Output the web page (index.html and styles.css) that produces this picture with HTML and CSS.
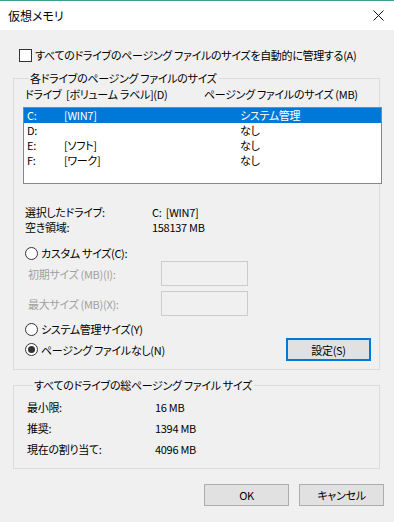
FILE: index.html
```html
<!DOCTYPE html>
<html lang="ja">
<head>
    <meta charset="UTF-8">
    <meta name="viewport" content="width=device-width, initial-scale=1.0">
    <title>仮想メモリ</title>
    <link rel="stylesheet" href="styles.css">
</head>
<body>
    <div class="titlebar">
        <span class="title">仮想メモリ</span>
        <svg class="close" width="11" height="11" viewBox="0 0 11 11">
            <path d="M0.5 0.5 L10.5 10.5 M10.5 0.5 L0.5 10.5" stroke="#111" stroke-width="1" fill="none"/>
        </svg>
    </div>

    <label class="auto">
        <input type="checkbox" class="check">
        <span>すべてのドライブのページング ファイルのサイズを自動的に管理する(A)</span>
    </label>

    <fieldset class="group group-drives">
        <legend>各ドライブのページング ファイルのサイズ</legend>
        <div class="list-head">
            <span>ドライブ</span>
            <span>[ボリューム ラベル](D)</span>
            <span>ページング ファイルのサイズ (MB)</span>
        </div>
        <div class="listbox">
            <div class="row selected"><span>C:</span><span>[WIN7]</span><span>システム管理</span></div>
            <div class="row"><span>D:</span><span></span><span>なし</span></div>
            <div class="row"><span>E:</span><span>[ソフト]</span><span>なし</span></div>
            <div class="row"><span>F:</span><span>[ワーク]</span><span>なし</span></div>
        </div>

        <div class="info">
            <span>選択したドライブ:</span><span>C:&nbsp; [WIN7]</span>
            <span>空き領域:</span><span>158137 MB</span>
        </div>

        <label class="radio-line custom">
            <input type="radio" name="size" class="radio">
            <span>カスタム サイズ(C):</span>
        </label>
        <div class="size-row">
            <span class="disabled">初期サイズ (MB)(I):</span>
            <input type="text" class="textbox" disabled>
        </div>
        <div class="size-row">
            <span class="disabled">最大サイズ (MB)(X):</span>
            <input type="text" class="textbox" disabled>
        </div>

        <label class="radio-line system">
            <input type="radio" name="size" class="radio">
            <span>システム管理サイズ(Y)</span>
        </label>
        <div class="last-row">
            <label class="radio-line">
                <input type="radio" name="size" class="radio" checked>
                <span>ページング ファイルなし(N)</span>
            </label>
            <button class="btn btn-focus">設定(S)</button>
        </div>
    </fieldset>

    <fieldset class="group group-total">
        <legend>すべてのドライブの総ページング ファイル サイズ</legend>
        <div class="totals">
            <span>最小限:</span><span>16 MB</span>
            <span>推奨:</span><span>1394 MB</span>
            <span>現在の割り当て:</span><span>4096 MB</span>
        </div>
    </fieldset>

    <div class="buttons">
        <button class="btn">OK</button>
        <button class="btn">キャンセル</button>
    </div>
</body>
</html>
```

FILE: styles.css
```css
* {
    padding: 0;
    margin: 0;
    box-sizing: border-box;
}
body {
    width: 394px;
    height: 522px;
    overflow: hidden;
    background-color: #f0f0f0;
    color: #000;
    font-family: "Noto Sans CJK JP", "Noto Sans", sans-serif;
    font-feature-settings: "palt";
    font-size: 11px;
    letter-spacing: -0.3px;
    line-height: 16px;
}
.titlebar {
    height: 30px;
    background-color: #fff;
    border-top: 1px solid #3c9f8f;
    display: flex;
    align-items: center;
    justify-content: space-between;
    padding: 0 10px 0 8px;
}
.title {
    font-size: 12px;
    letter-spacing: 0;
}
.close {
    display: block;
}

/* checkbox + radio look */
.check, .radio {
    appearance: none;
    -webkit-appearance: none;
    width: 13px;
    height: 13px;
    border: 1px solid #333;
    background-color: #fff;
    flex: none;
}
.radio {
    border-radius: 50%;
    display: flex;
    align-items: center;
    justify-content: center;
}
.radio:checked::after {
    content: "";
    width: 7px;
    height: 7px;
    border-radius: 50%;
    background-color: #333;
}
.auto {
    display: flex;
    align-items: center;
    gap: 3px;
    margin: 17px 0 0 19px;
    white-space: nowrap;
}

/* group boxes */
.group {
    border: 1px solid #dcdcdc;
    margin: 7px 14px 0 13px;
    min-inline-size: 0;
}
.group legend {
    margin-left: 6px;
    padding: 0 2px 0 1px;
    line-height: 16px;
}
.group-drives {
    padding: 0 0 8px 9px;
}
.list-head {
    display: grid;
    grid-template-columns: 41px 138px auto;
    padding-left: 2px;
    white-space: nowrap;
}
.listbox {
    margin: 5px -3px 0 0;
    height: 77px;
    border: 1px solid #828790;
    background-color: #fff;
}
.row {
    display: grid;
    grid-template-columns: 37px 176px auto;
    height: 15px;
    line-height: 15px;
    padding-left: 3px;
}
.row.selected {
    background-color: #0078d7;
    color: #fff;
}
.info {
    display: grid;
    grid-template-columns: 127px auto;
    line-height: 15px;
    margin-top: 21px;
    padding-left: 2px;
}
.radio-line {
    display: flex;
    align-items: center;
    gap: 3px;
    padding-left: 2px;
    height: 16px;
    white-space: nowrap;
}
.custom {
    margin-top: 10px;
}
.size-row {
    display: grid;
    grid-template-columns: 133px 87px;
    align-items: center;
    padding-left: 5px;
    height: 25px;
    margin-bottom: 5px;
}
.disabled {
    color: #a0a0a0;
}
.textbox {
    width: 87px;
    height: 25px;
    border: 1px solid #cccccc;
    background-color: #f0f0f0;
}
.system {
    margin-top: 3px;
}
.last-row {
    display: flex;
    align-items: center;
    justify-content: space-between;
    margin-top: 1px;
    padding-right: 8px;
}
.btn {
    width: 85px;
    height: 22px;
    border: 1px solid #adadad;
    background-color: #e1e1e1;
    font-family: inherit;
    font-feature-settings: "palt";
    font-size: 11px;
    letter-spacing: -0.3px;
    color: #000;
}
.btn-focus {
    height: 23px;
    border: 2px solid #0078d7;
}
.group-total {
    padding: 0 0 11px 13px;
}
.totals {
    display: grid;
    grid-template-columns: 128px auto;
    row-gap: 5px;
    margin-top: 6px;
}
.buttons {
    display: flex;
    justify-content: flex-end;
    gap: 10px;
    margin-top: 15px;
    padding-right: 10px;
}
```
